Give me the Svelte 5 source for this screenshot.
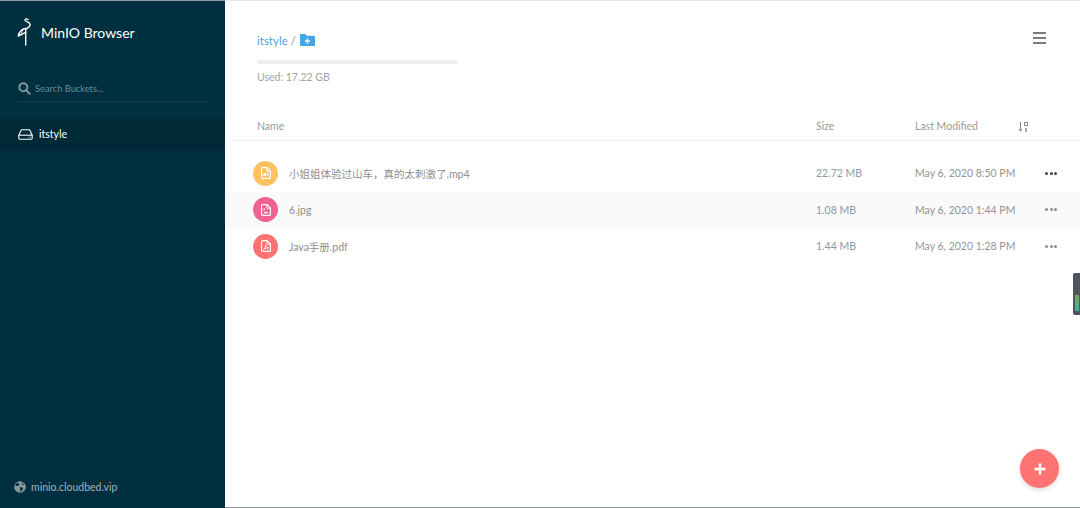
<script lang="ts">
	const files = [
		{ name: '小姐姐体验过山车，真的太刺激了.mp4', size: '22.72 MB', modified: 'May 6, 2020 8:50 PM', color: '#fdc162', kind: 'video', dark: true },
		{ name: '6.jpg', size: '1.08 MB', modified: 'May 6, 2020 1:44 PM', color: '#f06292', kind: 'image', dark: false },
		{ name: 'Java手册.pdf', size: '1.44 MB', modified: 'May 6, 2020 1:28 PM', color: '#ff7373', kind: 'pdf', dark: false }
	];
</script>

<div class="page">
	<aside class="sidebar">
		<header class="brand">
			<svg class="logo" viewBox="0 0 14 28" width="14" height="28" fill="none" stroke="#fff" stroke-width="1.400" stroke-linecap="round" stroke-linejoin="round">
				<path d="M8.700 27V12C8.700 10 13.200 9.500 13.200 6.700 13.200 4.300 9.300 3.800 8.200 2.600 7.500 1.300 9.500.2 11 1.500" />
				<path d="M8.700 10.500C4.800 11 2.200 14 1.200 18L8.700 14.300" />
				<path d="M5.600 12.300C4.700 13.800 4.500 15 4.900 16.200" stroke-width="1" />
			</svg>
			<span>MinIO Browser</span>
		</header>

		<div class="search">
			<svg viewBox="0 0 14 14" width="13" height="13" fill="none" stroke="#83939b" stroke-width="2.200" stroke-linecap="round">
				<circle cx="5.700" cy="5.700" r="4.300" />
				<path d="M9 9l3.600 3.600" />
			</svg>
			<span>Search Buckets...</span>
		</div>

		<nav class="buckets">
			<div class="bucket">
				<svg viewBox="0 0 15 11" width="15" height="11" fill="none" stroke="#fff" stroke-width="1.100" stroke-linejoin="round">
					<path d="M.8 6.200 3 1.400C3.200 1 3.500.8 4 .8h7c.5 0 .8.2 1 .6l2.200 4.800V9c0 .7-.5 1.200-1.200 1.200H2C1.300 10.200.8 9.700.8 9Z" />
					<path d="M.8 6.200h13.400" />
					<path d="M10.500 8.200h.8M12.300 8.200h.6" stroke-width="1" />
				</svg>
				<span>itstyle</span>
			</div>
		</nav>

		<footer class="host">
			<svg viewBox="0 0 12 12" width="12" height="12">
				<circle cx="6" cy="6" r="5.800" fill="#8a979d" />
				<path d="M3 1.800 5.500 3 5 4.500 3.200 5 1 4.500ZM6 6l3 .8-.5 2L7 10.800 6 9ZM8 1.500l2.200 2.300L8.500 4.200Z" fill="#00303f" />
			</svg>
			<span>minio.cloudbed.vip</span>
		</footer>
	</aside>

	<main class="content">
		<section class="top">
			<div class="crumbs">
				<span class="path"><span class="link">itstyle</span> /</span>
				<svg viewBox="0 0 15 12" width="15" height="12">
					<path d="M0 1.200C0 .5.500 0 1.200 0h4l1.500 1.800h7c.7 0 1.300.5 1.300 1.200v7.800c0 .7-.6 1.200-1.300 1.200H1.200C.5 12 0 11.500 0 10.800Z" fill="#46a5e5" />
					<path d="M7.500 4.500v5M5 7h5" stroke="#fff" stroke-width="1.500" />
				</svg>
			</div>
			<div class="usage"></div>
			<div class="used">Used: 17.22 GB</div>
			<button class="menu" aria-label="Menu"><i></i><i></i><i></i></button>
		</section>

		<div class="row head">
			<div class="name-col">Name</div>
			<div class="size-col">Size</div>
			<div class="date-col">Last Modified</div>
			<div class="sort-col">
				<svg viewBox="0 0 10 10" width="10" height="10" fill="none" stroke="#8a8a8a" stroke-width="1">
					<path d="M2.500 0v9M.8 7l1.700 2.200L4.200 7" />
					<rect x="6.500" y=".5" width="3" height="3" />
					<path d="M8 6v4" stroke-width="1.400" />
				</svg>
			</div>
		</div>

		<div class="list">
			{#each files as file, i}
				<div class="row file" class:alt={i === 1}>
					<div class="name-col">
						<span class="badge" style="background: {file.color}">
							<svg viewBox="0 0 10 12" width="10" height="12" fill="none" stroke="#fff" stroke-width="1.200">
								<path d="M1.500.6h4.500l3.400 3.400v6.400a1 1 0 0 1-1 1H1.500a1 1 0 0 1-1-1v-8.800a1 1 0 0 1 1-1Z" />
								<path d="M5.800.8v3.400h3.400" stroke-width=".9" />
								{#if file.kind === 'video'}
									<path d="M2.400 6h3v3h-3ZM5.500 7.500l2-1.300v2.600Z" fill="#fff" stroke="none" />
								{:else if file.kind === 'image'}
									<path d="M2.400 9.300 4 7.200l1.200 1.200.9-.8 1.500 1.700Z" fill="#fff" stroke="none" />
									<circle cx="3.300" cy="5.400" r=".8" fill="#fff" stroke="none" />
								{:else}
									<path d="M2.300 9.500C3.600 8.800 4.700 6.800 4.700 5.200 5 7 6.200 8 7.800 8 6 7.900 3.700 8.400 2.300 9.500Z" stroke-width=".8" />
								{/if}
							</svg>
						</span>
						<span class="fname">{file.name}</span>
					</div>
					<div class="size-col">{file.size}</div>
					<div class="date-col">{file.modified}</div>
					<div class="more" class:dark={file.dark}><i></i><i></i><i></i></div>
				</div>
			{/each}
		</div>

		<div class="widget"><span></span></div>
		<button class="fab" aria-label="Add">
			<svg viewBox="0 0 12 12" width="12" height="12"><path d="M6 .5v11M.5 6h11" stroke="#fff" stroke-width="2.400" /></svg>
		</button>
	</main>
</div>

<style>
	:global(body) {
		margin: 0;
		background: #fff;
	}

	.page {
		display: flex;
		height: 508px;
		overflow: hidden;
		font-family: Lato, 'Noto Sans CJK SC', sans-serif;
		font-size: 10.500px;
		color: #949494;
	}

	.sidebar {
		flex: 0 0 225px;
		display: flex;
		flex-direction: column;
		background: #00303f;
		border-top: 1px solid #8b9a9f;
		box-sizing: border-box;
	}

	.brand {
		display: flex;
		align-items: center;
		gap: 10px;
		height: 28px;
		padding: 17px 0 0 17px;
		color: #fff;
		font-size: 14px;
	}

	.search {
		display: flex;
		align-items: center;
		gap: 4px;
		height: 20px;
		margin: 32px 17px 0 18px;
		padding-bottom: 3px;
		border-bottom: 1px solid #0e4050;
		color: #6f8892;
		font-size: 9.300px;
	}

	.buckets {
		margin-top: 16px;
	}

	.bucket {
		display: flex;
		align-items: center;
		gap: 6px;
		height: 32px;
		padding-left: 18px;
		background: #002a37;
		color: #fff;
		font-size: 10.500px;
	}

	.host {
		display: flex;
		align-items: center;
		gap: 5px;
		margin-top: auto;
		padding: 0 0 15px 14px;
		color: #a3b3ba;
	}

	.content {
		flex: 1;
		position: relative;
		border-top: 1px solid #e6e6e6;
		border-bottom: 1px solid #8b9296;
		box-sizing: border-box;
	}

	.top {
		position: relative;
		height: 118px;
		padding: 31px 0 0 32px;
		box-sizing: border-box;
	}

	.crumbs {
		display: flex;
		align-items: center;
		gap: 4px;
		height: 16px;
		font-size: 11.500px;
	}

	.link {
		color: #46a5e5;
	}

	.usage {
		width: 200px;
		height: 4px;
		margin-top: 12px;
		background: #eee;
	}

	.used {
		margin-top: 7px;
		color: #a3a3a3;
	}

	.menu {
		position: absolute;
		top: 31px;
		right: 34px;
		display: flex;
		flex-direction: column;
		gap: 3px;
		width: 13px;
		padding: 0;
		border: 0;
		background: none;
	}

	.menu i {
		display: block;
		height: 2px;
		background: #7b7b7b;
	}

	.row {
		display: flex;
		align-items: center;
		padding-left: 28px;
	}

	.head {
		height: 21px;
		align-items: flex-start;
		border-bottom: 1px solid #f3f3f3;
		color: #9a9a9a;
	}

	.head > div {
		padding-top: 1px;
	}

	.head .name-col {
		padding-left: 4px;
	}

	.list {
		padding-top: 14px;
	}

	.file {
		height: 36.500px;
	}

	.alt {
		background: #fafafa;
	}

	.name-col {
		flex: 0 0 563px;
		display: flex;
		align-items: center;
		box-sizing: border-box;
	}

	.size-col {
		flex: 0 0 99px;
		color: #8e9aa5;
	}

	.head .size-col {
		color: #9a9a9a;
	}

	.date-col {
		flex: 0 0 130px;
		white-space: nowrap;
	}

	.head .date-col {
		flex-basis: 103px;
	}

	.head .sort-col {
		line-height: 0;
		padding-top: 3px;
	}

	.badge {
		display: flex;
		align-items: center;
		justify-content: center;
		width: 25px;
		height: 25px;
		border-radius: 50%;
	}

	.fname {
		margin-left: 11px;
		color: #8f8f8f;
	}

	.more {
		display: flex;
		gap: 1.500px;
	}

	.more i {
		width: 3px;
		height: 3px;
		border-radius: 50%;
		background: #8c8c8c;
	}

	.more.dark i {
		background: #444;
	}

	.widget {
		position: absolute;
		top: 272px;
		right: 0;
		width: 7px;
		height: 42px;
		border-radius: 2px 0 0 2px;
		background: #50555f;
	}

	.widget span {
		position: absolute;
		left: 2px;
		top: 22px;
		width: 4px;
		height: 16px;
		background: linear-gradient(#7ea75a, #3fae94);
	}

	.fab {
		position: absolute;
		right: 21px;
		bottom: 19px;
		display: flex;
		align-items: center;
		justify-content: center;
		width: 39px;
		height: 39px;
		padding: 0;
		border: 0;
		border-radius: 50%;
		background: #ff7373;
		box-shadow: 0 2px 5px rgba(0, 0, 0, 0.14);
	}
</style>
